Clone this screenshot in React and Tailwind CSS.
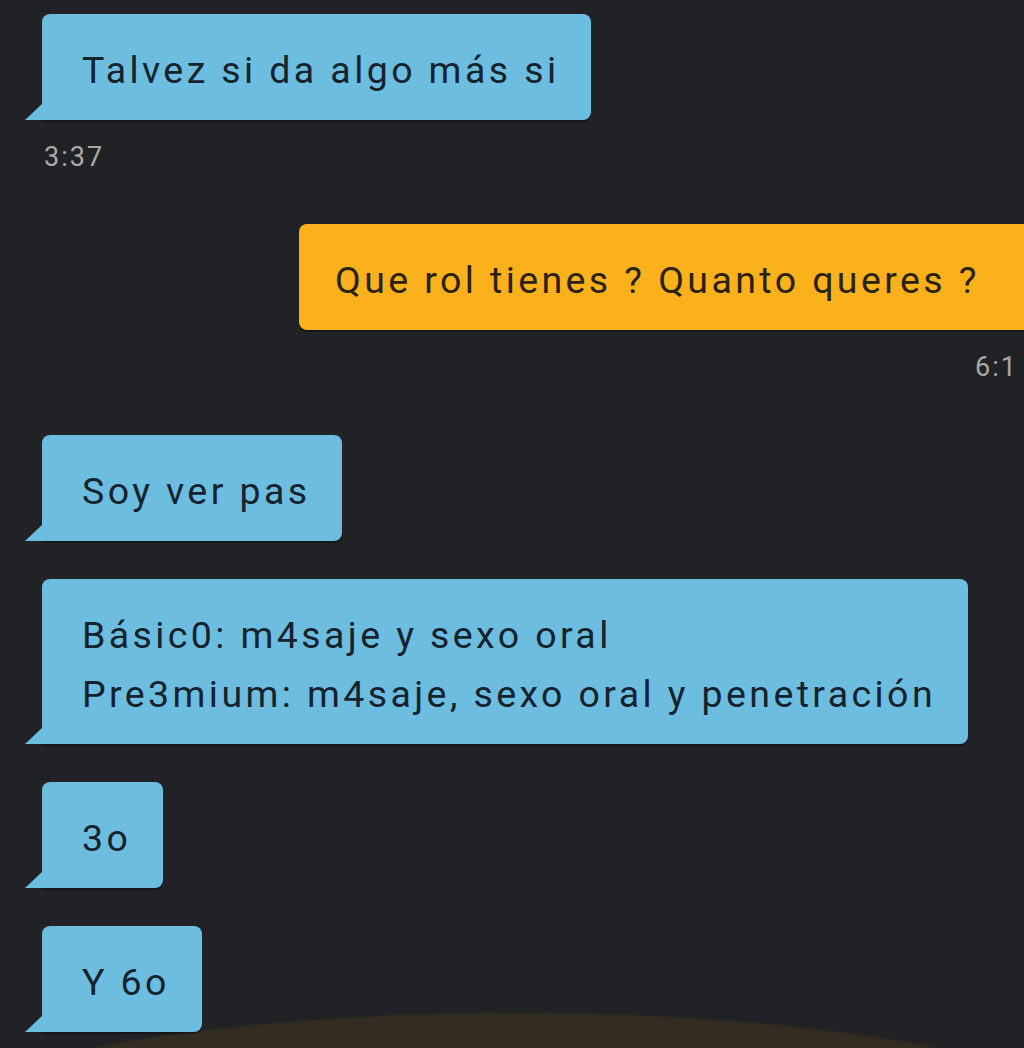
import React from 'react';

const messages = [
  { id: 1, side: 'in', lines: ['Talvez si da algo más si'], time: '3:37' },
  { id: 2, side: 'out', lines: ['Que rol tienes ? Quanto queres ?'], time: '6:1' },
  { id: 3, side: 'in', lines: ['Soy ver pas'] },
  { id: 4, side: 'in', lines: ['Básic0: m4saje y sexo oral', 'Pre3mium: m4saje, sexo oral y penetración'] },
  { id: 5, side: 'in', lines: ['3o'] },
  { id: 6, side: 'in', lines: ['Y 6o'] },
];

function Tail() {
  return (
    <svg className="absolute left-[-17px] bottom-0 w-[18px] h-[17px]" viewBox="0 0 18 17">
      <polygon points="18,0 18,17 0,17 " fill="#6dbde1" />
    </svg>
  );
}

function Incoming({ lines, first }) {
  return (
    <div className={`${first ? 'mt-[14px]' : 'mt-[38px]'} ml-[42px] flex`}>
      <div className="relative rounded-lg rounded-bl-none bg-[#6dbde1] pl-[40px] pr-[32px] pt-[27px] pb-[20px] text-[#15232c] shadow-[0_2px_0_rgba(0,0,0,0.35)]">
        {lines.map((l, i) => (
          <div key={i} className="leading-[59px] whitespace-nowrap">{l}</div>
        ))}
        <Tail />
      </div>
    </div>
  );
}

export default function App() {
  return (
    <div
      className="relative w-[1024px] h-[1048px] overflow-hidden bg-[#212226] text-[37.5px] tracking-[3.4px]"
      style={{ fontFamily: 'Roboto, "Noto Sans", sans-serif' }}
    >
      {/* glow at the bottom */}
      <div className="absolute left-[-85px] top-[1013px] w-[1200px] h-[240px] rounded-[50%] bg-[#332d21] blur-[1px]" />

      <div className="relative flex flex-col">
        <Incoming lines={messages[0].lines} first />
        <div className="mt-[22px] ml-[44px] text-[27px] leading-[30px] tracking-[2px] text-[#a9a9a9]">3:37</div>

        <div className="mt-[52px] ml-[299px] w-[760px] rounded-l-lg bg-[#fbb11b] pl-[36px] pt-[27px] pb-[20px] text-[#2a2212] shadow-[0_2px_0_rgba(0,0,0,0.35)]">
          <div className="leading-[59px] whitespace-nowrap">{messages[1].lines[0]}</div>
        </div>
        <div className="mt-[22px] mr-[6px] self-end text-[27px] leading-[30px] tracking-[2px] text-[#a9a9a9]">6:1</div>

        <div className="mt-[15px]" />
        {messages.slice(2).map(m => (
          <Incoming key={m.id} lines={m.lines} />
        ))}
      </div>
    </div>
  );
}
